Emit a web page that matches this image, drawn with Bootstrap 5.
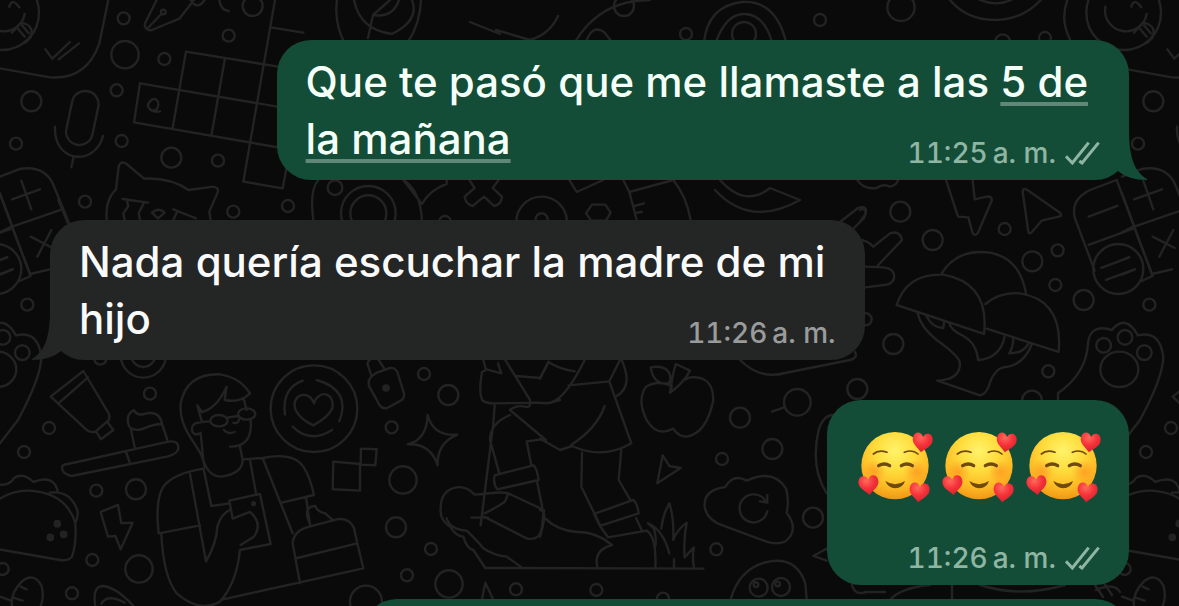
<!DOCTYPE html>
<html lang="es">
<head>
<meta charset="utf-8">
<meta name="viewport" content="width=device-width, initial-scale=1">
<title>Chat</title>
<link href="https://cdn.jsdelivr.net/npm/bootstrap@5.3.0/dist/css/bootstrap.min.css" rel="stylesheet">
<style>
  body { background: #0a0a0a; font-family: Inter, "Liberation Sans", sans-serif; }
  .chat { height: 100vh; padding: 40px 50px 0; gap: 40px; }
  .wallpaper { inset: 0; z-index: 0; }
  .wallpaper path, .wallpaper circle, .wallpaper rect, .wallpaper ellipse { vector-effect: non-scaling-stroke; }
  .bubble { border-radius: 34px; padding: 13px 29px; z-index: 1; }
  .sent { background: #144d37; color: #f4fff8; }
  .received { background: #242626; color: #fafafa; }
  .w-long { width: 79%; }
  .w-mid { width: 75.5%; }
  .w-next { width: 71%; height: 140px; }
  .msg-text { font-size: 42px; line-height: 57px; font-weight: 500; }
  .msg-text a { color: inherit; text-decoration: underline 4px rgba(255, 255, 255, .33); text-underline-offset: 5px; text-decoration-skip-ink: none; }
  .stamp { font-size: 28px; line-height: 28px; font-weight: 500; font-variant-numeric: tabular-nums; gap: 5px; }
  .msg-text .stamp { margin-top: 29px; }
  .sent .stamp { color: #8fb5a3; }
  .received .stamp { color: #9a9b9b; }
  .emoji-bubble { padding-top: 28px; gap: 40px; }
  .emoji-row { gap: 8px; }
  .emoji-row svg { overflow: visible; }
  .tail { bottom: 0; width: 30px; height: 50px; }
  .sent .tail { right: -18px; }
  .received .tail { left: -18px; transform: scaleX(-1); }
  .stack { margin-top: -26px; }
</style>
</head>
<body>
<main class="chat position-relative overflow-hidden d-flex flex-column">
  <svg class="wallpaper position-absolute w-100 h-100" aria-hidden="true">
    <defs>
      <g id="doodles" fill="none" stroke="#232323" stroke-width="2.4" stroke-linecap="round" stroke-linejoin="round">
        <!-- top left: chat bubble, microphone, word tiles, cat -->
        <g transform="scale(.3333)">
          <circle cx="5" cy="38" r="112"/><path d="M-50 20A58 58 0 0 0 74 42M28 20q8-28 30 2M36 98L62 68Q105 75 92 112L76 128M52 84l22 26M66 76l20 24"/>
          <path d="M325 0L298 130Q260 240 150 232L0 205L-40 197M136 148L157 176L210 126M176 178L237 130"/>
          <circle cx="371" cy="55" r="18"/><circle cx="375" cy="164" r="41"/><circle cx="493" cy="177" r="18"/><circle cx="350" cy="271" r="18"/><circle cx="94" cy="304" r="30"/><circle cx="48" cy="431" r="18"/><circle cx="365" cy="423" r="18"/><circle cx="514" cy="473" r="30"/><circle cx="654" cy="482" r="18"/><circle cx="255" cy="605" r="18"/><circle cx="700" cy="635" r="18"/><circle cx="864" cy="618" r="18"/><circle cx="686" cy="107" r="18"/><circle cx="758" cy="18" r="30"/>
          <path d="M658 0Q662 30 686 33M470 0L434 72Q436 94 456 90L538 56L582 0M444 84L484 42M572 0q20 32 42 0"/><circle cx="490" cy="36" r="7"/>
          <rect x="207" y="272" width="80" height="164" rx="40" transform="rotate(12 247 354)"/><path d="M165 380C160 490 285 500 309 408M221 470L214 502"/>
          <path d="M825 0L730 545L848 565L870 450M812 82L910 98M558 155L910 212M420 250L880 328M402 367L880 450M420 250L402 367M558 155L518 384M675 175L635 403"/>
          <path d="M480 334C450 340 436 318 450 304C466 284 486 310 468 330L456 332"/>
          <path d="M320 660Q315 600 348 568L356 500Q362 480 380 492L432 536Q510 532 566 570L640 560Q656 562 654 575L628 635L632 660M368 597L445 608M380 600L385 618L370 640L374 660M432 608L416 640L420 660M456 638Q476 620 494 638L474 655ZM520 628L588 655M532 634L520 660"/>
          <path d="M0 530L60 507Q130 495 158 550L208 672M0 580L38 682M36 598L120 568M64 542L94 628M30 682L182 630"/>
        </g>
        <!-- left: game pad tile, paw, tube -->
        <g transform="translate(0 200) scale(.3333)">
          <path d="M0 97L30 82M36 80L90 222L150 208M175 0L206 75M92 110L158 144M112 170L154 90M0 180l20-8M0 224l38-16"/>
          <circle cx="82" cy="314" r="18"/>
          <circle cx="430" cy="465" r="68"/><circle cx="430" cy="465" r="36"/><circle cx="301" cy="476" r="18"/><circle cx="450" cy="581" r="18"/>
        </g>
        <g transform="translate(0 350) scale(.3333)">
          <path d="M250 63L152 140L260 240Q275 250 288 244L303 268L340 240L322 216Q332 205 326 190ZM178 158L264 82M290 242L322 214"/>
          <path d="M388 230Q374 195 402 180Q410 200 440 190Q480 184 486 222Q460 222 430 236Q410 244 392 234L404 292M486 222L502 270"/>
          <path d="M204 342L505 275Q540 270 534 300Q526 314 500 320L215 378Q184 372 186 350Q190 342 204 342ZM378 305L390 340"/>
          <circle cx="147" cy="234" r="18"/><circle cx="72" cy="306" r="18"/><circle cx="289" cy="422" r="18"/><circle cx="408" cy="418" r="30"/><circle cx="277" cy="630" r="18"/><circle cx="417" cy="657" r="41"/><circle cx="216" cy="730" r="18"/><circle cx="8" cy="657" r="18"/>
          <path d="M-30 404Q-10 398 0 404Q30 406 42 384Q70 366 100 396Q162 372 174 426M-30 470Q20 420 90 422Q200 430 226 520Q230 580 216 620Q206 634 180 630L-60 588M150 428Q210 420 232 480Q236 500 226 518"/>
          <g fill="#222323"><circle cx="172" cy="521" r="8"/><circle cx="151" cy="562" r="8"/><circle cx="191" cy="553" r="8"/></g>
          <path d="M302 486L354 465L364 520L398 518L362 598L346 558L324 560Z"/>
          <path d="M36 768Q30 730 66 694Q100 666 124 706Q134 740 122 768M62 710L80 718M42 744L68 752M0 740L34 752M286 768Q276 710 308 708Q350 712 400 768M304 762Q320 730 374 758"/>
          <!-- man with phone -->
          <path d="M614 350C610 290 535 250 542 160Q560 70 660 73Q720 82 750 130Q720 160 674 150L680 110Q650 175 606 186L592 166L606 216M606 216L630 214M602 248L610 330Q625 380 665 380Q728 370 728 330L720 290M600 218C565 215 570 265 600 250M732 150L740 180M752 210Q760 290 690 290M672 240Q684 254 704 246M700 218Q714 224 718 206M684 202L716 198"/>
          <ellipse cx="657" cy="212" rx="26" ry="17"/><ellipse cx="740" cy="192" rx="26" ry="17"/>
          <path d="M612 356Q520 370 490 410Q465 450 476 550L600 526M484 550Q490 680 530 730Q600 790 660 755Q710 700 720 600L812 582L780 432L688 452L698 506L750 486Q790 520 762 560L722 585M570 372L618 634Q650 580 652 530Q665 490 690 480M612 362L634 468L690 460M750 330L768 430M728 328L788 324L878 550M788 324Q880 305 910 350Q930 380 942 435L845 458M670 748L1090 655L1072 580L1062 534Q1048 502 1010 508L920 532Q880 545 878 580L900 700M892 624L1072 580M918 440L930 525M930 522Q906 470 946 468Q950 484 976 490L1000 512"/>
          <circle cx="761" cy="461" r="4"/>
        </g>
        <!-- medallion, padlock, sparkle, blocks -->
        <g transform="translate(260 350) scale(.3333)">
          <circle cx="162" cy="176" r="130"/><path d="M162 160C145 115 90 135 107 180Q120 208 160 226Q205 202 217 175C225 125 175 118 162 160ZM75 194Q64 116 128 92M170 90Q275 120 238 214M98 230Q150 282 216 240"/>
          <path d="M350 68L390 54Q405 52 412 66L432 130Q434 145 422 152L382 174Q366 178 358 164L328 110Q322 92 334 80ZM334 76L322 40Q330 20 352 24L372 54"/><circle cx="378" cy="114" r="8" fill="#222323"/>
          <circle cx="492" cy="72" r="18"/><circle cx="565" cy="135" r="30"/><circle cx="395" cy="232" r="18"/><circle cx="429" cy="390" r="41"/><circle cx="408" cy="532" r="30"/><circle cx="513" cy="597" r="18"/><circle cx="441" cy="676" r="18"/><circle cx="567" cy="702" r="41"/><circle cx="768" cy="718" r="18"/><circle cx="318" cy="755" r="48"/>
          <path d="M503 195Q520 260 592 254Q530 280 533 346Q512 280 443 283Q500 270 503 195ZM220 335L300 342L300 422L218 418ZM303 296L350 298L346 346L302 344Z"/>
          <!-- hiker -->
          <path d="M670 30L678 60L666 66Q655 130 668 152Q680 160 704 160L870 158L900 150M714 40L724 70L680 58M736 30L810 150Q815 175 795 170Q770 164 750 180L858 270M770 78L840 84L866 36M704 165L700 220L662 526M750 195Q690 220 690 270L718 370M704 376L820 346Q830 350 836 390L712 418Q698 400 704 376ZM846 268L800 274L814 345M832 398L848 478M635 503L684 503M672 500L800 565Q840 575 846 530L852 480L745 430L735 455Q700 478 674 490M745 430Q720 425 690 430L644 434Q620 408 590 412Q540 420 542 480Q540 510 570 530Q590 560 610 560Q620 596 640 600L676 654L1330 656M560 505Q570 538 620 542Q650 570 670 595Q700 616 740 620L782 650M666 748L676 698L698 745"/>
        </g>
        <g transform="translate(540 350) scale(.3333)">
          <path d="M134 30Q70 160 20 160L-20 158M25 36Q60 58 104 64M0 86L25 36M86 106L208 94L240 30M208 94L274 280Q190 330 96 288L60 300L0 266M194 168Q170 236 94 284M246 32Q280 110 230 138M126 308L124 410L180 525M244 298L236 390L270 448M162 492L280 450Q292 460 296 490L180 528ZM180 528L204 562L320 542Q350 560 346 655M288 504L306 542M0 480Q20 480 8 530L0 560M16 506Q50 540 110 546Q170 545 216 585Q160 600 172 652"/>
          <path d="M388 610Q370 540 324 520L342 536Q350 562 346 590M364 536Q370 490 388 460Q402 500 400 570Q410 540 440 518Q430 570 434 622L462 592Q456 620 462 654M402 628L402 654"/>
          <path d="M390 128Q400 100 390 106Q350 90 318 110Q290 150 320 210Q350 262 400 236Q415 260 440 260Q500 250 520 150Q520 76 450 82L436 88M390 128Q400 60 408 42L450 62Q430 100 390 128ZM386 100Q340 105 332 52Q380 44 390 75Q394 90 386 100"/>
          <path d="M368 316L388 348L422 354L352 400ZM696 185L732 172M880 195Q850 195 836 240Q810 350 860 430M860 596L820 618L860 632M572 748Q600 650 690 634Q770 622 796 700L800 748"/>
          <circle cx="600" cy="203" r="30"/><circle cx="772" cy="157" r="40"/><circle cx="697" cy="297" r="30"/><circle cx="546" cy="327" r="18"/><circle cx="819" cy="503" r="30"/><circle cx="529" cy="598" r="18"/><circle cx="169" cy="720" r="18"/><circle cx="369" cy="746" r="18"/><circle cx="656" cy="713" r="27"/><circle cx="723" cy="711" r="27"/><circle cx="648" cy="704" r="7"/><circle cx="713" cy="702" r="7"/>
          <path d="M556 411Q580 370 620 392Q700 355 738 415Q748 450 740 488Q780 540 735 575Q710 585 680 575L550 527Q500 510 494 470Q490 420 556 411ZM682 484A42 42 0 1 1 676 452M682 436L682 458L660 454"/>
        </g>
        <!-- between the first two messages -->
        <g transform="translate(270 30) scale(.3333)">
          <path d="M400 450Q450 480 456 570M456 522Q480 480 530 462L530 450M400 450L456 522M145 450Q118 480 130 570M598 450L614 474L584 500Q586 522 608 528L642 500L672 528Q694 524 696 500L668 474L686 450M898 450L920 486L1000 450M1060 450L1078 486L1210 450Q1250 500 1262 570M1078 486Q1090 530 1100 570M1094 528l28-8M1100 548l16-2"/>
          <circle cx="195" cy="473" r="22"/><circle cx="295" cy="550" r="82"/><circle cx="295" cy="550" r="54"/><circle cx="815" cy="576" r="76"/><circle cx="815" cy="568" r="18"/><circle cx="525" cy="576" r="18"/><path d="M966 524L1006 524L1022 548L1008 572H964L948 550Z"/>
        </g>
        <!-- along the top edge -->
        <path d="M337 0Q334 22 344 42M421 0Q420 24 408 42M354 0Q360 30 392 34Q420 20 412 0M368 38L373 15L390 0M373 15Q393 18 399 0M496 30L530 40Q550 34 558 16M470 22L500 34M575 42Q600 0 650 0M586 42Q592 24 604 32L612 42M704 42Q708 6 742 2Q776 0 786 42M716 42Q726 14 744 14Q764 14 772 42"/>
        <circle cx="686" cy="34" r="6"/><circle cx="624" cy="6" r="10"/><circle cx="744" cy="34" r="12"/><circle cx="820" cy="20" r="6"/>
        <!-- right column -->
        <g transform="translate(850 0) scale(.3333)">
          <circle cx="153" cy="22" r="41"/><path d="M300 0Q350 60 436 60Q520 58 572 0M390 0Q438 20 484 0M652 0Q630 60 660 118"/><circle cx="458" cy="125" r="22"/><circle cx="585" cy="114" r="18"/><path d="M22 540Q40 570 80 564Q100 550 120 560Q140 556 144 540"/>
        </g>
        <g transform="translate(860 180) scale(.3333)">
          <path d="M258 0L294 110L325 112L338 160Q346 170 354 158L396 60Q394 48 380 50L344 58L338 0M488 34Q490 22 502 30L600 98Q608 108 596 110L545 122L514 158Q506 164 504 150Z"/>
          <path d="M0 90Q14 80 18 100L0 126M0 180Q20 180 40 200L90 160Q120 150 126 180L52 258M16 260L70 262Q106 266 102 295Q98 310 80 314L16 322"/>
          <path d="M770 0L690 30Q630 60 645 115L704 272M770 0L878 288M686 195L822 145M845 303L878 288M686 110L772 78M724 264L808 232M738 300L824 268"/>
          <circle cx="775" cy="267" r="75"/>
          <path d="M110 375Q140 280 250 284Q390 310 372 462ZM244 282Q290 205 390 218Q480 235 498 340M376 372Q420 335 480 340Q610 360 596 516L380 446M172 396Q180 440 230 480Q300 530 300 550Q300 600 232 602L360 646Q376 644 386 620Q400 570 430 562Q490 558 516 492M200 410Q220 445 250 444L252 426M268 430Q272 450 310 468Q350 490 354 540Q420 535 434 470M460 474Q460 500 448 520Q490 520 506 490"/>
          <circle cx="121" cy="95" r="30"/><circle cx="218" cy="180" r="30"/><circle cx="434" cy="147" r="18"/><circle cx="517" cy="244" r="30"/><circle cx="593" cy="211" r="18"/><circle cx="586" cy="315" r="18"/><circle cx="671" cy="360" r="30"/><circle cx="100" cy="492" r="30"/><circle cx="17" cy="418" r="18"/><circle cx="565" cy="574" r="18"/><circle cx="516" cy="662" r="30"/><circle cx="-8" cy="627" r="30"/>
          <path d="M594 660V640Q680 580 684 490Q690 430 756 450Q796 400 834 466Q900 450 910 530Q910 590 840 720L786 790"/>
          <circle cx="731" cy="496" r="22"/><circle cx="795" cy="472" r="22"/><circle cx="853" cy="518" r="22"/><ellipse cx="778" cy="568" rx="57" ry="53"/>
        </g>
        <path d="M720 180Q745 208 770 188L800 200M715 190Q750 228 800 200M740 360Q760 380 785 373L850 360Q858 358 855 352M840 222L858 208Q870 204 864 218L852 230"/>
        <path d="M852 585Q855 596 866 592H885M890 600Q900 588 930 585M952 585V600M980 585Q1020 598 1065 585M1095 585l8 12M1104 583l8 12M1096 590Q1114 582 1120 592"/>
      </g>
    </defs>
    <use href="#doodles" x="-1122"/>
    <use href="#doodles"/>
    <use href="#doodles" x="1122"/>
  </svg>

  <svg class="d-none" aria-hidden="true"><defs>
    <path id="tail-shape" d="M12 0C12 24 16 41 30 49V50C18 50 8 47 1 41L0 10Z" fill="currentColor"/>
  </defs></svg>

  <article class="bubble sent w-long position-relative align-self-end">
    <div class="msg-text">Que te pasó que me llamaste a las <a href="#">5 de la mañana</a>
      <div class="stamp float-end d-flex align-items-center"><span>11:25</span><span>a. m.</span>
        <svg class="ms-1" width="35" height="24" viewBox="645 418 105 72" fill="none" stroke="currentColor" stroke-width="9" role="img" aria-label="Entregado"><path d="M648 464L667 484L716 423M688 478L696 484L746 423"/></svg>
      </div>
    </div>
    <svg class="tail position-absolute" style="color:#144d37" viewBox="0 0 30 50" aria-hidden="true"><use href="#tail-shape"/></svg>
  </article>

  <article class="bubble received w-mid position-relative align-self-start">
    <div class="msg-text">Nada quería escuchar la madre de mi hijo
      <div class="stamp float-end d-flex align-items-center"><span>11:26</span><span>a. m.</span></div>
    </div>
    <svg class="tail position-absolute" style="color:#242626" viewBox="0 0 30 50" aria-hidden="true"><use href="#tail-shape"/></svg>
  </article>

  <article class="bubble sent emoji-bubble d-flex flex-column position-relative align-self-end">
    <div class="emoji-row d-flex">
      <svg width="76" height="76" viewBox="18 9 228 228" role="img" aria-label="Cara sonriente con corazones">
        <defs>
          <radialGradient id="skin" cx="50%" cy="28%" r="74%"><stop offset="0" stop-color="#fff36a"/><stop offset=".4" stop-color="#ffdc3c"/><stop offset=".75" stop-color="#fdb824"/><stop offset="1" stop-color="#ee9413"/></radialGradient>
          <radialGradient id="blush"><stop offset="0" stop-color="#ff8a1c" stop-opacity=".6"/><stop offset="1" stop-color="#ff8a1c" stop-opacity="0"/></radialGradient>
          <radialGradient id="love" cx="40%" cy="25%" r="80%"><stop offset="0" stop-color="#ff6a5c"/><stop offset=".5" stop-color="#f5323a"/><stop offset="1" stop-color="#d3202c"/></radialGradient>
          <path id="heart" fill="url(#love)" d="M0 31C-12 18 -31 8 -30 -9C-29 -30 -7 -33 0 -15C7 -33 29 -30 30 -9C31 8 12 18 0 31Z"/>
          <g id="loved-face">
            <circle cx="135" cy="122" r="101" fill="url(#skin)"/>
            <circle cx="72" cy="140" r="36" fill="url(#blush)"/><circle cx="198" cy="140" r="36" fill="url(#blush)"/>
            <g fill="none" stroke="#70490c" stroke-linecap="round"><path stroke-width="5" d="M70 87Q86 73 111 82M163 82Q187 72 204 87"/><path stroke-width="10" d="M86 122Q103 112 119 122M154 122Q171 112 187 122"/></g>
            <path fill="#70490c" d="M106 168Q135 187 165 168Q158 190 136 190Q114 189 106 168Z"/>
            <use href="#heart" transform="translate(217 51) rotate(8)"/><use href="#heart" transform="translate(56 179) rotate(-5)"/><use href="#heart" transform="translate(208 201) rotate(6)"/>
          </g>
        </defs>
        <use href="#loved-face"/>
      </svg>
      <svg width="76" height="76" viewBox="18 9 228 228" role="img" aria-label="Cara sonriente con corazones"><use href="#loved-face"/></svg>
      <svg width="76" height="76" viewBox="18 9 228 228" role="img" aria-label="Cara sonriente con corazones"><use href="#loved-face"/></svg>
    </div>
    <div class="stamp d-flex align-items-center align-self-end"><span>11:26</span><span>a. m.</span>
      <svg class="ms-1" width="35" height="24" viewBox="645 418 105 72" fill="none" stroke="currentColor" stroke-width="9" role="img" aria-label="Entregado"><path d="M648 464L667 484L716 423M688 478L696 484L746 423"/></svg>
    </div>
  </article>

  <article class="bubble sent w-next stack flex-shrink-0 position-relative align-self-end"></article>
</main>
<script src="https://cdn.jsdelivr.net/npm/bootstrap@5.3.0/dist/js/bootstrap.bundle.min.js"></script>
</body>
</html>
